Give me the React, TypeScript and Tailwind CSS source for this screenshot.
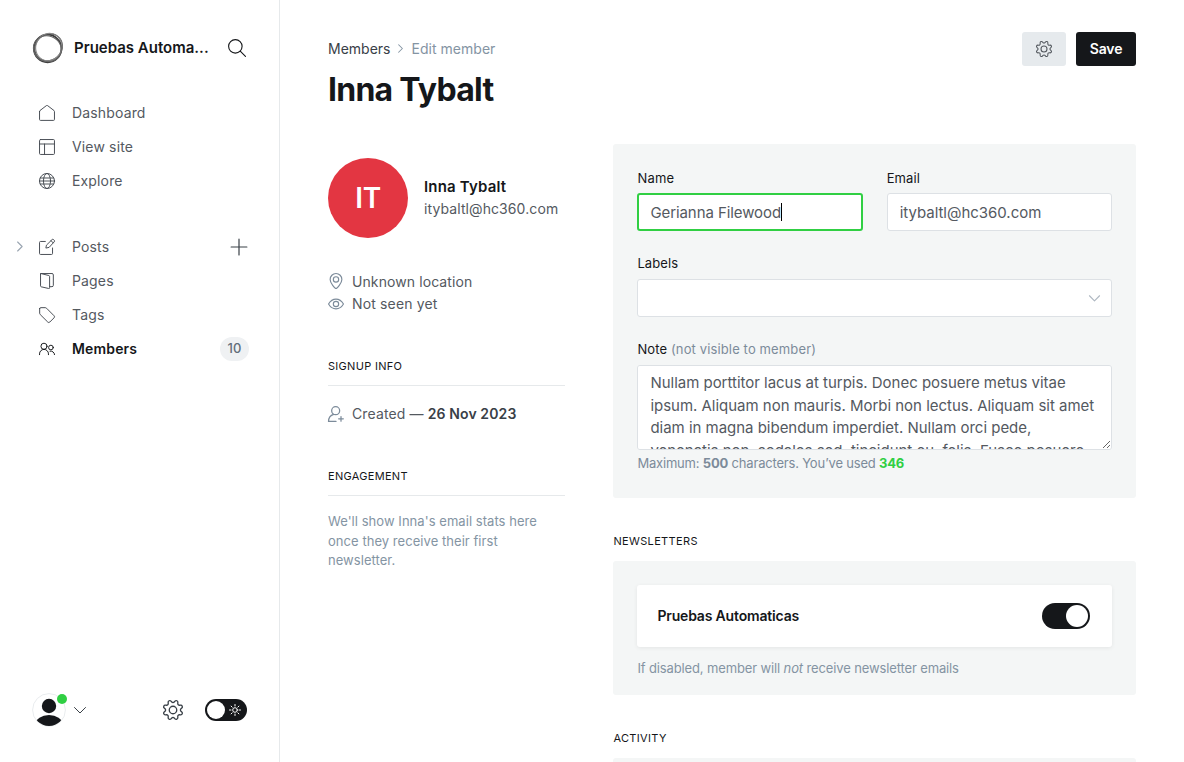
import type { ReactNode } from 'react';

const COG =
  'M10.546 2.438a1.957 1.957 0 0 0 2.908 0L14.4 1.4a1.959 1.959 0 0 1 3.41 1.413l-.071 1.4A1.958 1.958 0 0 0 19.79 6.27l1.4-.071A1.959 1.959 0 0 1 22.6 9.606l-1.04.94a1.962 1.962 0 0 0 0 2.909l1.04.94a1.959 1.959 0 0 1-1.413 3.41l-1.4-.071a1.958 1.958 0 0 0-2.056 2.056l.071 1.4A1.959 1.959 0 0 1 14.4 22.6l-.941-1.041a1.959 1.959 0 0 0-2.908 0L9.606 22.6A1.959 1.959 0 0 1 6.2 21.192l.072-1.4a1.958 1.958 0 0 0-2.056-2.056l-1.4.071A1.958 1.958 0 0 1 1.4 14.4l1.041-.94a1.96 1.96 0 0 0 0-2.909L1.4 9.606A1.958 1.958 0 0 1 2.813 6.2l1.4.071a1.958 1.958 0 0 0 2.056-2.06L6.2 2.81A1.959 1.959 0 0 1 9.606 1.4z';

const NOTE =
  'Nullam porttitor lacus at turpis. Donec posuere metus vitae ipsum. Aliquam non mauris. Morbi non lectus. Aliquam sit amet diam in magna bibendum imperdiet. Nullam orci pede, venenatis non, sodales sed, tincidunt eu, felis. Fusce posuere felis sed lacus.';

type IconProps = { className?: string; children: ReactNode; stroke?: number };

function Icon({ className = '', children, stroke = 1.5 }: IconProps) {
  return (
    <svg
      viewBox="0 0 24 24"
      fill="none"
      stroke="currentColor"
      strokeWidth={stroke}
      strokeLinecap="round"
      strokeLinejoin="round"
      className={`shrink-0 overflow-visible ${className}`}
    >
      {children}
    </svg>
  );
}

function Cog({ className, stroke }: { className: string; stroke?: number }) {
  return (
    <Icon className={className} stroke={stroke}>
      <path d={COG} />
      <circle cx="12" cy="12" r="4.5" />
    </Icon>
  );
}

function NavItem({ icon, label, active, children }: { icon: ReactNode; label: string; active?: boolean; children?: ReactNode }) {
  return (
    <a
      className={`flex h-[34px] items-center pl-[39px] pr-[30px] ${
        active ? 'font-semibold text-[#15171a]' : 'text-[#54595f]'
      }`}
    >
      <span className={`mr-[17px] flex w-4 shrink-0 ${active ? 'text-[#15171a]' : 'text-[#454b52]'}`}>
        <Icon className="size-4" stroke={1.45}>{icon}</Icon>
      </span>
      <span className="flex-1 pb-0.5 tracking-[0.15px]">{label}</span>
      {children}
    </a>
  );
}

function Sidebar() {
  return (
    <nav className="flex w-[280px] shrink-0 flex-col border-r border-[#e6e9eb] text-[14px]">
      <div className="flex h-[96px] items-center pl-8 pr-[33px]">
        <svg viewBox="0 0 32 32" fill="none" className="mr-[10px] size-8 shrink-0">
          <circle cx="15.6" cy="16.5" r="13.8" stroke="#3a3a3a" strokeWidth="1.7" />
          <ellipse cx="16.6" cy="15.4" rx="14.3" ry="12.9" transform="rotate(-40 16.6 15.4)" stroke="#555" strokeWidth="1.3" />
          <ellipse cx="16.8" cy="15" rx="12.9" ry="14" transform="rotate(28 16.8 15)" stroke="#888" strokeWidth="1.1" />
          <ellipse cx="15.4" cy="16.8" rx="14.1" ry="12.8" transform="rotate(20 15.4 16.8)" stroke="#666" strokeWidth="1" />
        </svg>
        <span className="flex-1 text-[15px] font-semibold text-[#15171a]">Pruebas Automa...</span>
        <Icon className="size-[18px] text-[#15171a]" stroke={1.5}>
          <circle cx="9.8" cy="9.8" r="9" />
          <path d="M16.3 16.3 23.3 23.3" />
        </Icon>
      </div>

      <div className="flex flex-col">
        <NavItem label="Dashboard" icon={<path d="M.8 9.6v12.1a1.4 1.4 0 0 0 1.4 1.4h19.6a1.4 1.4 0 0 0 1.4-1.4V9.6a1.5 1.5 0 0 0-.6-1.2L13 1a1.6 1.6 0 0 0-2 0L1.4 8.4a1.5 1.5 0 0 0-.6 1.2z" />} />
        <NavItem label="View site" icon={<><rect x=".8" y=".8" width="22.4" height="22.4" rx="1.5" /><path d="M.8 7.5h22.4M8.3 7.5v15.7" /></>} />
        <NavItem label="Explore" icon={<><circle cx="12" cy="12" r="11.3" /><ellipse cx="12" cy="12" rx="5.3" ry="11.3" /><path d="M.7 12h22.6M2 7.5h20M2 16.5h20" /></>} />
      </div>

      <div className="mt-8 flex flex-col">
        <div className="relative">
          <Icon className="absolute left-[15px] top-[12px] size-[9px] text-[#9aa5b1]" stroke={3}>
            <path d="M7 0 19 12 7 24" />
          </Icon>
          <NavItem
            label="Posts"
            icon={<><path d="m14.6 12.7-4.3.9.9-4.4L19.6.9a1.6 1.6 0 0 1 2.3 0l1 1a1.6 1.6 0 0 1 0 2.3zM18 2.5 21.3 5.8" /><path d="M20.3 13.5v8.2a1.5 1.5 0 0 1-1.5 1.5H2.3a1.5 1.5 0 0 1-1.5-1.5V5.2a1.5 1.5 0 0 1 1.5-1.5h7.2" /></>}
          >
            <Icon className="mr-px size-[18px] text-[#394047]" stroke={1.6}>
              <path d="M12 1.5v21M1.5 12h21" />
            </Icon>
          </NavItem>
        </div>
        <NavItem label="Pages" icon={<><path d="M2.3 1.5v17.8a1.5 1.5 0 0 0 1 1.4l11 2.5a1.2 1.2 0 0 0 1.6-1.2V5.2a1.5 1.5 0 0 0-1.1-1.4L3.3.9c-.6-.1-1 .1-1 .6z" /><path d="M3 .8h16.5a2 2 0 0 1 2 2v15.7a2 2 0 0 1-2 2h-3.4" /></>} />
        <NavItem label="Tags" icon={<path d="M1 2.3v7a3 3 0 0 0 .9 2.1L13.1 22.5a2.2 2.2 0 0 0 3.2 0l6.2-6.2a2.2 2.2 0 0 0 0-3.2L11.4 1.9A3 3 0 0 0 9.3 1h-7A1.3 1.3 0 0 0 1 2.3z" />} />
        <NavItem
          label="Members"
          active
          icon={<><circle cx="7.5" cy="7.9" r="4.6" /><path d="M.8 20.5v-1.2a6.7 6.7 0 0 1 13.4 0v1.2" /><circle cx="17.9" cy="9.8" r="3.5" /><path d="M16.5 15.2a5.4 5.4 0 0 1 6.8 5.2" /></>}
        >
          <span className="flex h-6 w-[29px] items-center justify-center rounded-full bg-[#eff1f3] text-[13px] font-medium text-[#626d79]">10</span>
        </NavItem>
      </div>

      <div className="mt-auto flex h-[104px] items-center pl-8 pr-8">
        <div className="relative size-[34px]">
          <svg viewBox="0 0 34 34" className="size-[34px]">
            <defs>
              <clipPath id="avatar"><circle cx="17" cy="17" r="16" /></clipPath>
            </defs>
            <circle cx="17" cy="17" r="16.4" fill="#fff" stroke="#e9ecee" strokeWidth="1" />
            <g clipPath="url(#avatar)" fill="#15171a">
              <circle cx="17" cy="13" r="7.2" />
              <ellipse cx="17" cy="31.5" rx="13.5" ry="9.6" />
            </g>
          </svg>
          <span className="absolute left-[25px] top-px size-[10px] rounded-full bg-[#30cf43]" />
        </div>
        <Icon className="ml-[8px] size-3 text-[#394047]" stroke={2}>
          <path d="M1 7 12 18 23 7" />
        </Icon>
        <Cog className="ml-[77px] size-5 text-[#394047]" stroke={1.6} />
        <div className="ml-[22px] flex h-[22px] w-[42px] items-center justify-between rounded-full bg-[#15171a] pl-[2px] pr-[6px]">
          <span className="size-[18px] rounded-full bg-white" />
          <Icon className="size-3 text-white" stroke={2}>
            <circle cx="12" cy="12" r="4.6" />
            <path d="M12 1v3M12 20v3M1 12h3M20 12h3M4.2 4.2l2.1 2.1M17.7 17.7l2.1 2.1M4.2 19.8l2.1-2.1M17.7 6.3l2.1-2.1" />
          </Icon>
        </div>
      </div>
    </nav>
  );
}

function MemberSummary() {
  return (
    <aside className="flex w-[237px] shrink-0 flex-col pt-[14px] text-[14px] text-[#54595f]">
      <div className="flex items-center">
        <div className="mr-4 flex size-20 shrink-0 items-center justify-center rounded-full bg-[#e33642] text-[28px] font-semibold tracking-[-0.4px] text-white">IT</div>
        <div className="flex flex-col pb-0.5">
          <span className="text-[15px] font-semibold leading-[22px] tracking-[0.18px] text-[#15171a]">Inna Tybalt</span>
          <span className="leading-[21px] tracking-[0.09px]">itybaltl@hc360.com</span>
        </div>
      </div>
      <div className="mt-[33px] flex h-[22px] items-center tracking-[0.09px]">
        <Icon className="mb-[3px] mr-2 size-4 text-[#7c8b9a]" stroke={1.7}>
          <path d="M12 23.2c-1.5 0-8.8-7.9-8.8-13.6a8.8 8.8 0 0 1 17.6 0c0 5.7-7.3 13.6-8.8 13.6z" />
          <circle cx="12" cy="9.6" r="4" />
        </Icon>
        <span className="pb-0.5">Unknown location</span>
      </div>
      <div className="flex h-[22px] items-center tracking-[0.15px]">
        <Icon className="mr-2 size-4 text-[#7c8b9a]" stroke={1.7}>
          <path d="M.8 12c2.5-4.300 6.500-7.300 11.200-7.300S20.700 7.700 23.200 12c-2.500 4.300-6.500 7.300-11.200 7.300S3.300 16.300.8 12z" />
          <circle cx="12" cy="12" r="4" />
        </Icon>
        <span className="pb-0.5">Not seen yet</span>
      </div>

      <h3 className="mt-[41px] h-[30px] border-b border-[#e6e9eb] text-[11px] leading-[20px] tracking-[0.3px] text-[#15171a]">SIGNUP INFO</h3>
      <div className="mt-[17px] flex h-[22px] items-center tracking-[0.12px]">
        <Icon className="mb-px mr-2 size-4 text-[#7c8b9a]" stroke={1.9}>
          <circle cx="11.5" cy="7" r="6" />
          <path d="M8.5 12.5C3.5 14 .8 17.5.8 23.2H12M19.5 15.8v7M16 19.3h7" />
        </Icon>
        <span className="pb-0.5">Created — <b className="font-semibold text-[#394047]">26 Nov 2023</b></span>
      </div>

      <h3 className="mt-[41px] h-[30px] border-b border-[#e6e9eb] text-[11px] leading-[20px] tracking-[0.3px] text-[#15171a]">ENGAGEMENT</h3>
      <p className="mt-4 text-[13px] leading-[19.5px] tracking-[0.05px] text-[#8494a3]">
        We'll show Inna's email stats here
        <br />
        once they receive their first
        <br />
        newsletter.
      </p>
    </aside>
  );
}

function MemberForm() {
  return (
    <section className="flex flex-col rounded-[3px] bg-[#f4f6f6] px-6 pb-[25px] pt-6 text-[13px] text-[#15171a]">
      <div className="flex gap-6">
        <label className="flex flex-1 flex-col">
          <span className="h-[25px] leading-[20px] tracking-[0.2px]">Name</span>
          <span className="flex h-[38px] items-center rounded-[3px] border-2 border-[#30cf43] bg-white px-[11px] text-[15px] tracking-[-0.08px] text-[#54595f]">
            <span className="pt-0.5">Gerianna Filewood</span>
            <span className="h-[18px] w-px bg-black" />
          </span>
        </label>
        <label className="flex flex-1 flex-col">
          <span className="h-[25px] leading-[20px] tracking-[0.1px]">Email</span>
          <span className="flex h-[38px] items-center rounded-[3px] border border-[#dde1e5] bg-white px-3 pt-0.5 text-[15px] tracking-[-0.03px] text-[#54595f]">
            itybaltl@hc360.com
          </span>
        </label>
      </div>
      <label className="mt-[22px] flex flex-col">
        <span className="h-[26px] leading-[20px] tracking-[0.1px]">Labels</span>
        <span className="flex h-[38px] items-center justify-end rounded-[3px] border border-[#dde1e5] bg-white pr-[11px]">
          <Icon className="size-[11px] text-[#aeb7c1]" stroke={2.4}>
            <path d="M1 6 12 17 23 6" />
          </Icon>
        </span>
      </label>
      <label className="mt-[22px] flex flex-col">
        <span className="h-[26px] leading-[20px] tracking-[0.13px]">
          Note <span className="text-[#7c8b9a]">(not visible to member)</span>
        </span>
        <textarea
          defaultValue={NOTE}
          className="block h-[85px] resize-y rounded-[3px] border border-[#dde1e5] bg-white px-3 py-[6px] text-[15px] leading-[22.5px] tracking-[-0.02px] text-[#54595f] [scrollbar-width:none]"
        />
      </label>
      <p className="mt-[4px] leading-[19px] tracking-[-0.19px] text-[#7c8b9a]">
        Maximum: <b className="font-bold">500</b> characters. You’ve used <b className="font-bold text-[#30cf43]">346</b>
      </p>
    </section>
  );
}

export default function App() {
  return (
    <div className="flex h-[762px] w-[1184px] overflow-hidden bg-white font-[Inter,sans-serif] text-[#15171a]">
      <Sidebar />
      <main className="flex flex-1 flex-col pl-12 pr-12">
        <header className="flex h-[144px] shrink-0 justify-between pt-8">
          <div className="flex flex-col">
            <div className="flex h-[34px] items-center pb-0.5 text-[14px]">
              <span className="text-[#394047]">Members</span>
              <Icon className="mx-[6px] mt-px size-[9px] text-[#8494a3]" stroke={2.8}>
                <path d="M7 2 17 12 7 22" />
              </Icon>
              <span className="tracking-[0.03px] text-[#8494a3]">Edit member</span>
            </div>
            <h1 className="text-[32px] font-bold leading-[48px] tracking-[-0.75px]">Inna Tybalt</h1>
          </div>
          <div className="flex gap-[10px]">
            <button className="flex h-[34px] w-11 items-center justify-center rounded-[3px] bg-[#e6eaed] text-[#54595f]">
              <Cog className="size-4" stroke={1.6} />
            </button>
            <button className="h-[34px] w-[60px] rounded-[3px] bg-[#15171a] pb-0.5 text-[14px] font-semibold tracking-[-0.1px] text-white">Save</button>
          </div>
        </header>

        <div className="flex gap-[48.4px]">
          <MemberSummary />
          <div className="flex flex-1 flex-col">
            <MemberForm />
            <h3 className="mt-[33px] h-[30px] text-[11px] leading-[20px] tracking-[0.35px]">NEWSLETTERS</h3>
            <section className="flex h-[134px] flex-col rounded-[3px] bg-[#f4f6f6] px-6 pt-6">
              <div className="flex h-[62px] items-center justify-between rounded-[3px] bg-white pl-5 pr-[22px] shadow-[0_1px_4px_rgba(0,0,0,0.07)]">
                <span className="pb-0.5 text-[14px] font-semibold tracking-[-0.17px]">Pruebas Automaticas</span>
                <span className="flex h-[26px] w-12 items-center justify-end rounded-full bg-[#15171a] pr-[2px]">
                  <span className="size-[22px] rounded-full bg-white" />
                </span>
              </div>
              <p className="mt-[11px] text-[13px] leading-[20px] tracking-[-0.13px] text-[#8494a3]">
                If disabled, member will <i>not</i> receive newsletter emails
              </p>
            </section>
            <h3 className="mt-[33px] h-[30px] text-[11px] leading-[20px] tracking-[0.35px]">ACTIVITY</h3>
            <section className="h-20 rounded-[3px] bg-[#f4f6f6]" />
          </div>
        </div>
      </main>
    </div>
  );
}
